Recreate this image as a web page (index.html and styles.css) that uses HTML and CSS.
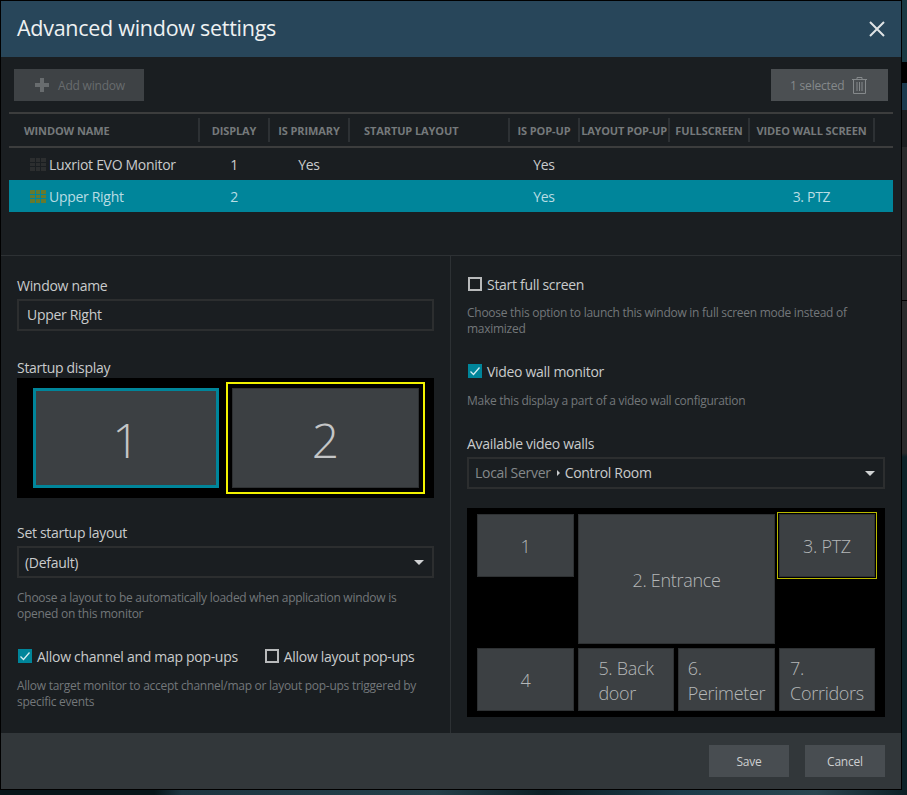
FILE: index.html
```html
<!DOCTYPE html>
<html lang="en">
<head>
<meta charset="UTF-8">
<meta name="viewport" content="width=device-width, initial-scale=1.0">
<title>Advanced window settings</title>
<link rel="stylesheet" href="styles.css">
</head>
<body>

<div class="dialog">
    <div class="dialog-header">
        <h1>Advanced window settings</h1>
        <svg class="close-icon" width="16" height="16" viewBox="0 0 16 16"><path d="M1 1 L15 15 M15 1 L1 15" stroke="#dfe3e5" stroke-width="2" fill="none"/></svg>
    </div>

    <div class="toolbar">
        <div class="tool-btn add-btn">
            <svg width="14" height="14" viewBox="0 0 14 14"><path d="M5 0 H9 V5 H14 V9 H9 V14 H5 V9 H0 V5 H5 Z" fill="#686c6e"/></svg>
            <span>Add window</span>
        </div>
        <div class="tool-btn selected-btn">
            <span>1 selected</span>
            <svg width="15" height="17" viewBox="0 0 15 17" fill="none" stroke="#85898b"><path d="M0 2.5 H15 M5 2.5 V0.5 H10 V2.5 M1.5 2.5 V16.5 H13.5 V2.5 M5 5 V14 M7.5 5 V14 M10 5 V14"/></svg>
        </div>
    </div>

    <div class="win-table">
        <div class="win-head">
            <div class="first">WINDOW NAME</div>
            <div>DISPLAY</div>
            <div>IS PRIMARY</div>
            <div class="left">STARTUP LAYOUT</div>
            <div>IS POP-UP</div>
            <div class="tight">LAYOUT POP-UP</div>
            <div>FULLSCREEN</div>
            <div>VIDEO WALL SCREEN</div>
        </div>
        <div class="win-row">
            <div class="name-cell">
                <svg class="grid-icon" width="16" height="13" viewBox="0 0 16 13"><path d="M0 0h5v4H0zM6 0h4v4H6zM11 0h5v4h-5zM0 5h5v3H0zM6 5h4v3H6zM11 5h5v3h-5zM0 9h5v4H0zM6 9h4v4H6zM11 9h5v4h-5z" fill="#2c2e2f"/></svg>
                Luxriot EVO Monitor
            </div>
            <div>1</div>
            <div>Yes</div>
            <div></div>
            <div>Yes</div>
            <div></div>
            <div></div>
            <div></div>
        </div>
        <div class="win-row active">
            <div class="name-cell">
                <svg class="grid-icon" width="16" height="13" viewBox="0 0 16 13"><path d="M0 0h5v4H0zM6 0h4v4H6zM11 0h5v4h-5zM0 5h5v3H0zM6 5h4v3H6zM11 5h5v3h-5zM0 9h5v4H0zM6 9h4v4H6zM11 9h5v4h-5z" fill="#667a2e"/></svg>
                Upper Right
            </div>
            <div>2</div>
            <div></div>
            <div></div>
            <div>Yes</div>
            <div></div>
            <div></div>
            <div>3. PTZ</div>
        </div>
    </div>

    <div class="split">
        <div class="col col-left">
            <label class="field-label">Window name</label>
            <input class="text-input" type="text" value="Upper Right">

            <label class="field-label display-label">Startup display</label>
            <div class="displays">
                <div class="monitor current">1</div>
                <div class="monitor picked">2</div>
            </div>

            <label class="field-label layout-label">Set startup layout</label>
            <div class="select"><span>(Default)</span><i class="caret"></i></div>
            <p class="help help-layout">Choose a layout to be automatically loaded when application window is opened on this monitor</p>

            <div class="check-line popups">
                <span class="check-item"><span class="box checked"><svg width="14" height="14" viewBox="0 0 14 14"><path d="M2.5 7.5 L5.5 10.5 L11.5 3.5" stroke="#d5eef2" stroke-width="1.3" fill="none"/></svg></span>Allow channel and map pop-ups</span>
                <span class="check-item"><span class="box"></span>Allow layout pop-ups</span>
            </div>
            <p class="help help-popups">Allow target monitor to accept channel/map or layout pop-ups triggered by specific events</p>
        </div>

        <div class="col col-right">
            <div class="check-line">
                <span class="check-item"><span class="box"></span>Start full screen</span>
            </div>
            <p class="help help-full">Choose this option to launch this window in full screen mode instead of maximized</p>

            <div class="check-line wall-check">
                <span class="check-item"><span class="box checked"><svg width="14" height="14" viewBox="0 0 14 14"><path d="M2.5 7.5 L5.5 10.5 L11.5 3.5" stroke="#d5eef2" stroke-width="1.3" fill="none"/></svg></span>Video wall monitor</span>
            </div>
            <p class="help help-wall">Make this display a part of a video wall configuration</p>

            <label class="field-label walls-label">Available video walls</label>
            <div class="select select-wall">
                <span><span class="crumb">Local Server</span><i class="crumb-arrow"></i>Control Room</span>
                <i class="caret"></i>
            </div>

            <div class="wall">
                <div class="tile">1</div>
                <div class="tile tile-big">2. Entrance</div>
                <div class="tile tile-picked">3. PTZ</div>
                <div class="tile tile-low">4</div>
                <div class="tile tile-low"><span>5. Back<br>door</span></div>
                <div class="tile tile-low"><span>6.<br>Perimeter</span></div>
                <div class="tile tile-low"><span>7.<br>Corridors</span></div>
            </div>
        </div>
    </div>

    <div class="dialog-footer">
        <div class="foot-btn">Save</div>
        <div class="foot-btn">Cancel</div>
    </div>
</div>

</body>
</html>
```

FILE: styles.css
```css
html, body {
    height: 100%;
    overflow: hidden;
}

body {
    margin: 0;
    font-family: "Open Sans", "Noto Sans", Arial, sans-serif;
    font-size: 13px;
    color: #c9cbcc;
    background-color: #0c1f25;
    background-image:
        linear-gradient(to right, #07161a 0, #07161a 17%, #1d3540 20%, #24404a 48%, #0c1f25 60%, #1c3c4a 75%, #2a4650 90%, #0c1f25 100%),
        linear-gradient(to bottom, #1a3a44 0, #1a3a44 62px, #000 62px, #000 83px, #1b3a4e 83px, #1b3a4e 110px, #1c1e20 110px, #1c1e20 147px, #2a2b2c 147px, #2a2b2c 300px, #000 300px, #000 301px, #2a2b2c 301px, #2a2b2c 453px, #0d2228 457px);
    background-size: 100% 5px, 100% 100%;
    background-position: bottom, top;
    background-repeat: no-repeat;
}

.dialog {
    width: 900px;
    height: 788px;
    border: 1px solid #000;
    background-color: #1a1e21;
    display: flex;
    flex-direction: column;
}

/* Header */
.dialog-header {
    height: 56px;
    flex: none;
    background-color: #28465a;
    display: flex;
    align-items: center;
    justify-content: space-between;
    padding: 0 16px;
    box-sizing: border-box;
}

.dialog-header h1 {
    margin: 0 0 3px;
    font-size: 21.5px;
    font-weight: 400;
    color: #eef1f2;
    letter-spacing: -0.27px;
}

/* Toolbar */
.toolbar {
    height: 55px;
    flex: none;
    box-sizing: border-box;
    padding: 12px 13px 0;
    display: flex;
    justify-content: space-between;
    align-items: flex-start;
}

.tool-btn {
    height: 32px;
    display: flex;
    align-items: center;
    font-size: 12px;
    letter-spacing: -0.2px;
}

.add-btn {
    width: 130px;
    background-color: #3e4245;
    color: #686c6e;
    padding-left: 21px;
    box-sizing: border-box;
    gap: 9px;
}

.selected-btn {
    width: 117px;
    background-color: #4b4f52;
    color: #85898b;
    padding-left: 19px;
    box-sizing: border-box;
    gap: 8px;
}

/* Window table */
.win-table {
    margin: 0 8px;
    height: 143px;
    flex: none;
}

.win-head,
.win-row {
    display: grid;
    align-items: center;
    text-align: center;
}

.win-head {
    grid-template-columns: 191px 70px 80px 160px 70px 90px 80px 125px 1fr;
    height: 36px;
    box-sizing: border-box;
    border-top: 2px solid #3c3d3d;
    border-bottom: 2px solid #3c3d3d;
    font-size: 11px;
    font-weight: 700;
    color: #75797b;
    letter-spacing: -0.1px;
}

.win-head > div {
    height: 24px;
    line-height: 26px;
    border-right: 2px solid #2d3134;
    white-space: nowrap;
}

.win-head .first {
    text-align: left;
    padding-left: 15px;
}

.win-head .left {
    text-align: left;
    padding-left: 14px;
}

.win-head .tight {
    letter-spacing: -0.2px;
}

.win-row {
    grid-template-columns: 190px 70px 80px 160px 70px 90px 80px 125px 1fr;
    height: 32px;
    font-size: 14px;
    letter-spacing: -0.3px;
    color: #c9cbcc;
}

.win-row.active {
    background-color: #00859a;
    color: #b8dde4;
}

.name-cell {
    display: flex;
    align-items: center;
    gap: 3px;
    padding-left: 21px;
    text-align: left;
}

/* Two form columns */
.split {
    flex: 1;
    display: flex;
    border-top: 1px solid #2d3134;
    min-height: 0;
}

.col {
    box-sizing: border-box;
}

.col-left {
    width: 450px;
    padding: 20px 16px 0;
    border-right: 1px solid #2d3134;
}

.col-right {
    flex: 1;
    padding: 18px 16px 0;
}

.field-label {
    display: block;
    font-size: 14px;
    line-height: 20px;
    margin-bottom: 3px;
    letter-spacing: -0.3px;
}

.display-label {
    margin-top: 27px;
    margin-bottom: 0;
}

.layout-label {
    margin-top: 25px;
}

.walls-label {
    margin-top: 25px;
}

.text-input {
    display: block;
    width: 100%;
    height: 32px;
    box-sizing: border-box;
    background-color: #1a1e21;
    border: 2px solid #2c2e2f;
    padding: 0 8px 2px;
    font-family: inherit;
    font-size: 14px;
    letter-spacing: -0.3px;
    color: #c9cbcc;
    outline: none;
}

.select {
    height: 32px;
    box-sizing: border-box;
    border: 2px solid #2c2e2f;
    padding: 0 8px 0 6px;
    display: flex;
    align-items: center;
    justify-content: space-between;
    font-size: 14px;
    letter-spacing: -0.3px;
}

.select-wall > span {
    margin-bottom: 2px;
}

.caret {
    width: 0;
    height: 0;
    border-left: 5px solid transparent;
    border-right: 5px solid transparent;
    border-top: 5px solid #d0d2d3;
}

.crumb {
    color: #85898b;
}

.crumb-arrow {
    display: inline-block;
    width: 0;
    height: 0;
    margin: 0 5px 2px 6px;
    border-top: 3px solid transparent;
    border-bottom: 3px solid transparent;
    border-left: 3px solid #c9cbcc;
}

/* Startup display picker */
.displays {
    height: 120px;
    box-sizing: border-box;
    background-color: #000;
    padding: 10px 15px 10px 16px;
    display: flex;
    gap: 13px;
}

.monitor {
    flex: none;
    width: 187px;
    box-sizing: border-box;
    background-color: #3c4043;
    border: 1px solid #2e3133;
    padding-top: 2px;
    display: flex;
    align-items: center;
    justify-content: center;
    font-size: 48px;
    font-weight: 300;
    color: #c4c6c7;
}

.monitor.current {
    width: 186px;
    border: 3px solid #00859a;
}

.monitor.picked {
    outline: 2px solid #f2f200;
    outline-offset: 4px;
}

/* Checks and help text */
.check-line {
    display: flex;
    height: 20px;
    gap: 26px;
    font-size: 14px;
    letter-spacing: -0.3px;
}

.popups {
    margin-top: 24px;
}

.wall-check {
    margin-top: 24px;
}

.check-item {
    display: flex;
    align-items: center;
    gap: 5px;
    white-space: nowrap;
    padding-left: 1px;
}

.box {
    width: 14px;
    height: 14px;
    box-sizing: border-box;
    border: 2px solid #b8babb;
    flex: none;
}

.box.checked {
    border: none;
    background-color: #00859a;
    display: block;
}

.box svg {
    display: block;
}

.help {
    margin: 0;
    font-size: 12px;
    line-height: 16px;
    color: #73777a;
    letter-spacing: -0.27px;
}

.help-layout {
    margin-top: 12px;
}

.help-popups {
    margin-top: 12px;
}

.help-full {
    margin-top: 11px;
}

.help-wall {
    margin-top: 12px;
}

/* Video wall grid */
.wall {
    margin-top: 19px;
    height: 209px;
    box-sizing: border-box;
    background-color: #000;
    padding: 6px 10px;
    display: grid;
    grid-template-columns: 97px 96px 97px 96px;
    grid-template-rows: 63px 63px 63px;
    gap: 4px;
}

.tile {
    box-sizing: border-box;
    background-color: #3c4043;
    border: 1px solid #2e3133;
    padding-top: 2px;
    display: flex;
    align-items: center;
    justify-content: center;
    font-size: 18px;
    line-height: 25px;
    font-weight: 300;
    color: #b4b7b8;
    letter-spacing: -0.3px;
}

.tile-big {
    grid-column: span 2;
    grid-row: span 2;
}

.tile-picked {
    outline: 1px solid #b9b900;
    outline-offset: 1px;
}

.tile-low {
    grid-row: 3;
}

/* Footer */
.dialog-footer {
    height: 56px;
    flex: none;
    box-sizing: border-box;
    background-color: #32373a;
    display: flex;
    justify-content: flex-end;
    align-items: center;
    gap: 16px;
    padding-right: 16px;
}

.foot-btn {
    width: 80px;
    height: 32px;
    line-height: 33px;
    text-align: center;
    background-color: #484d51;
    font-size: 12px;
    letter-spacing: -0.2px;
    color: #cdcfd0;
}
```
